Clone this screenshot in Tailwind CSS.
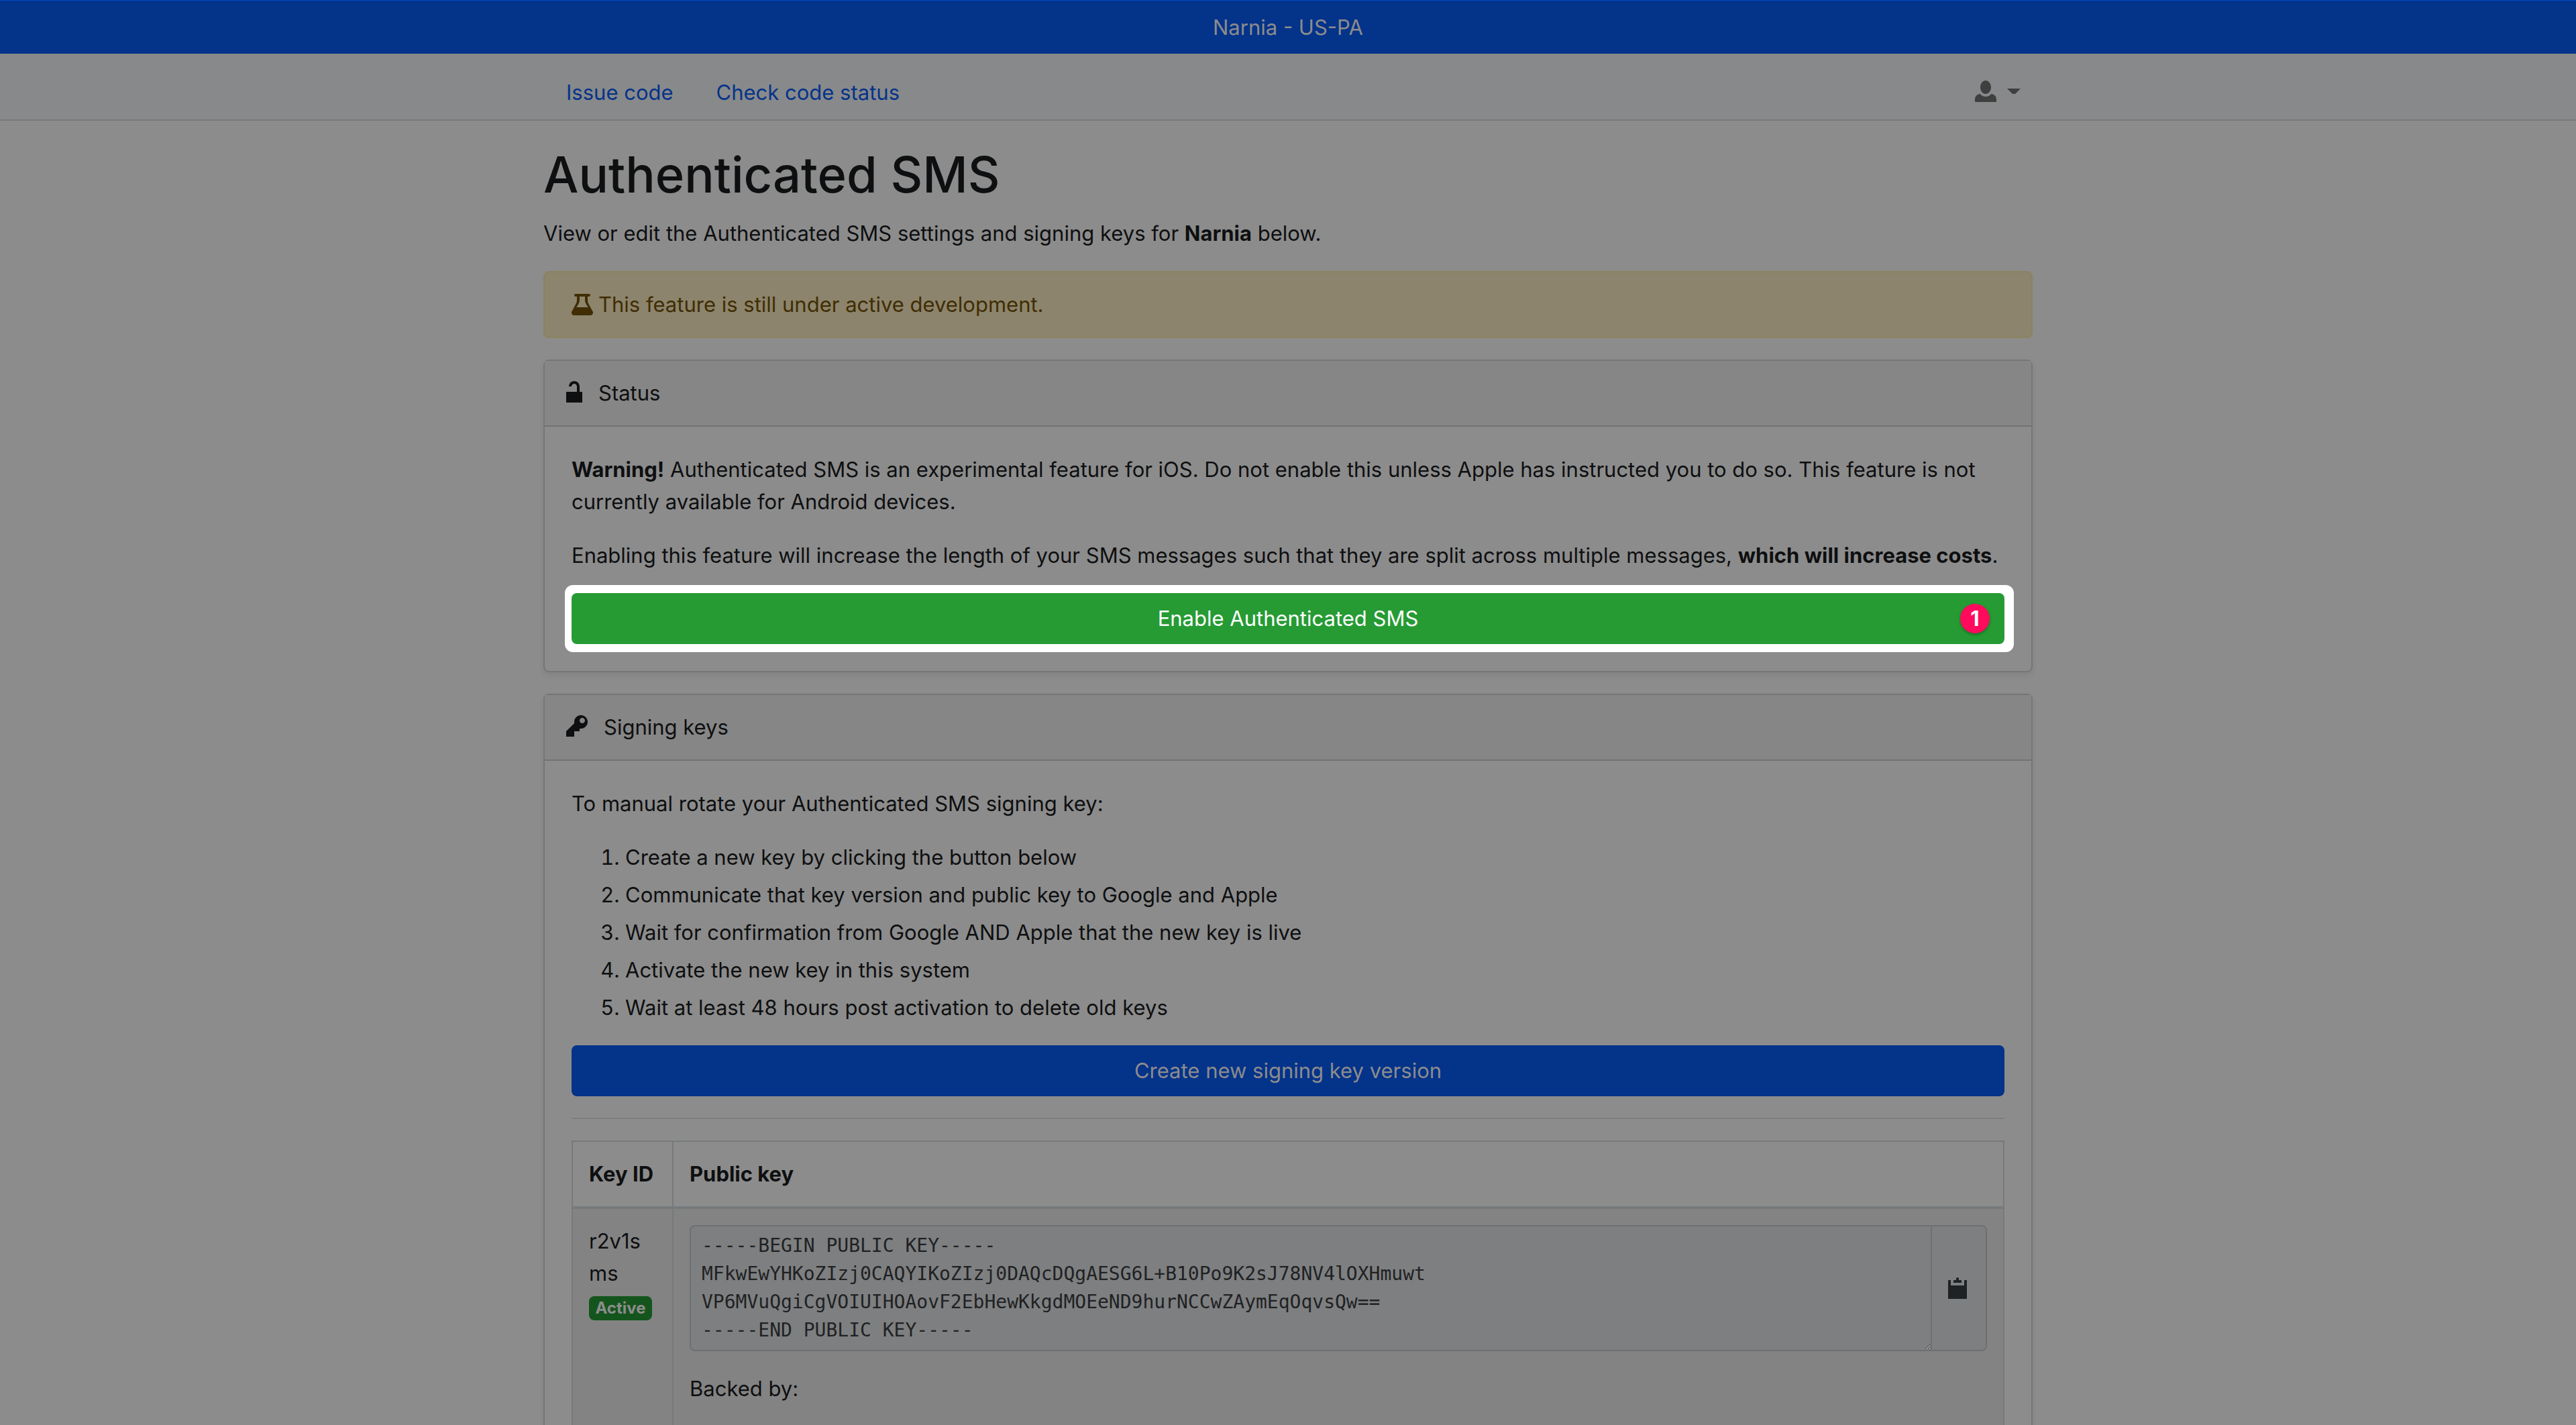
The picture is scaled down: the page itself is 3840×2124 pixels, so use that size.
<!DOCTYPE html>
<html lang="en">
<head>
<meta charset="utf-8">
<title>Authenticated SMS</title>
<script src="https://cdn.jsdelivr.net/npm/@tailwindcss/browser@4"></script>
</head>
<body class="h-screen overflow-hidden bg-[#8c8c8c] font-['Inter',sans-serif] text-[31px] leading-[48px] text-[#0e0f10]">
<div class="border-t border-[#0447cc] bg-[#04338a] pt-4 pb-[15px] text-center text-[#8c8c8c]">Narnia - US-PA</div>
<header class="border-b-2 border-[#76797b] bg-[#88898a] pt-[34px] pb-4">
  <nav class="mx-auto flex w-full max-w-[2220px] items-center gap-16 px-[34px] text-[#04338a]">
    <a href="#issue">Issue code</a>
    <a href="#status">Check code status</a>
    <button type="button" aria-label="Account" class="-mr-4 ml-auto flex items-center gap-4 pb-1 text-[#3f3f3f]">
      <svg class="size-8" viewBox="0 0 8 8" fill="currentColor"><path d="M4 0c-1.1 0-2 1.12-2 2.5s.9 2.5 2 2.5 2-1.12 2-2.5-.9-2.5-2-2.5zm-2.09 5c-1.06.05-1.91.92-1.91 2v1h8v-1c0-1.08-.84-1.95-1.91-2-.54.61-1.28 1-2.09 1-.81 0-1.55-.39-2.09-1z"/></svg>
      <svg class="h-2 w-5" viewBox="0 0 20 8" fill="currentColor"><path d="M0 0h20l-8 8h-4z"/></svg>
    </button>
  </nav>
</header>

<main class="mx-auto w-full max-w-[2220px] pt-8">
  <h1 class="mb-4 text-[74px] leading-[96px] font-medium">Authenticated SMS</h1>
  <p class="mb-8">View or edit the Authenticated SMS settings and signing keys for <strong>Narnia</strong> below.</p>

  <div role="alert" class="mb-8 flex items-center gap-2 rounded-lg border-2 border-[#8c8261] bg-[#8c846c] px-10 py-6 text-[#402d04]">
    <svg class="size-8" viewBox="0 0 8 8" fill="currentColor"><path fill-rule="evenodd" d="M1.5 0a.5.5 0 0 0 0 1h.5v1.4c0 .9-.5 1.6-1.2 2.9-.4.7-.8 1.2-.8 1.7 0 .6.4 1 1 1h6c.6 0 1-.4 1-1 0-.5-.4-1-.8-1.7-.7-1.3-1.2-2-1.2-2.9v-1.4h.5a.5.5 0 0 0 0-1zM3 1h2v1.4c0 .9.6 1.8 1.2 2.6h-4.4c.6-.8 1.2-1.700 1.200-2.600z"/></svg>
    <span>This feature is still under active development.</span>
  </div>

  <section class="mb-8 rounded-lg border-2 border-[#767676] shadow-[0_4px_8px_rgba(0,0,0,0.075)]">
    <h2 class="flex items-center gap-6 border-b-2 border-[#727272] bg-[#868686] px-8 py-6">
      <svg class="-mt-1 h-8 w-6" viewBox="0 0 6 8" fill="currentColor"><path d="M3 0c-1.1 0-2 .9-2 2h1c0-.56.44-1 1-1s1 .44 1 1v2h-4v4h6v-4h-1v-2c0-1.1-.9-2-2-2z"/></svg>
      Status
    </h2>
    <div class="p-10">
      <p class="mb-8"><strong>Warning!</strong> Authenticated SMS is an experimental feature for iOS. Do not enable this unless Apple has instructed you to do so. This feature is not currently available for Android devices.</p>
      <p class="mb-8">Enabling this feature will increase the length of your SMS messages such that they are split across multiple messages, <strong>which will increase costs</strong>.</p>
      <div class="relative isolate">
        <div class="absolute -inset-y-3 -right-3.5 -left-2.5 -z-10 rounded-xl bg-white"></div>
        <button type="button" class="block w-full rounded-lg bg-[#269b34] py-3.5 text-white">Enable Authenticated SMS</button>
        <span class="absolute top-4 right-[22px] size-11 rounded-full bg-[#ff0a5c] text-center text-[31px] leading-11 font-bold text-white shadow-[0_2px_4px_rgba(0,0,0,0.3)]">1</span>
      </div>
    </div>
  </section>

  <section class="rounded-t-lg border-2 border-[#767676] shadow-[0_4px_8px_rgba(0,0,0,0.075)]">
    <h2 class="flex items-center gap-6 border-b-2 border-[#727272] bg-[#868686] px-8 py-6">
      <svg class="-mt-1 size-8" viewBox="0 0 8 8" fill="currentColor"><path d="M5.5 0c-1.38 0-2.5 1.12-2.5 2.5 0 .16 0 .32.03.47l-3.03 3.03v2h3v-2h2v-1l.03-.03c.15.03.31.03.47.03 1.38 0 2.5-1.12 2.5-2.5s-1.12-2.5-2.5-2.5zm.5 1c.55 0 1 .45 1 1s-.45 1-1 1-1-.45-1-1 .45-1 1-1z"/></svg>
      Signing keys
    </h2>
    <div class="p-10">
      <p class="mb-8">To manual rotate your Authenticated SMS signing key:</p>
      <ol class="mb-8 flex list-decimal flex-col gap-2 pl-20">
        <li>Create a new key by clicking the button below</li>
        <li>Communicate that key version and public key to Google and Apple</li>
        <li>Wait for confirmation from Google AND Apple that the new key is live</li>
        <li>Activate the new key in this system</li>
        <li>Wait at least 48 hours post activation to delete old keys</li>
      </ol>
      <button type="button" class="block w-full rounded-lg bg-[#04338a] py-3.5 text-[#8c8c8c]">Create new signing key version</button>
      <hr class="my-8 border-t-2 border-[#7d7d7d]">
      <table class="w-full table-fixed border-separate border-spacing-0 border-2 border-[#767a7c] text-left align-top">
        <colgroup><col class="w-[150px]"><col></colgroup>
        <thead>
          <tr>
            <th scope="col" class="border-r-2 border-b-4 border-[#767a7c] py-6 pl-6 font-bold whitespace-nowrap">Key ID</th>
            <th scope="col" class="border-b-4 border-[#767a7c] p-6 font-bold">Public key</th>
          </tr>
        </thead>
        <tbody class="bg-[#838383]">
          <tr>
            <td class="border-r-2 border-[#767a7c] p-6 align-top">
              <span class="block break-all">r2v1s ms</span>
              <span class="mt-[10px] block w-[94px] rounded-lg bg-[#14551d] py-1.5 text-center text-2xl leading-6 font-bold text-[#8c8c8c]">Active</span>
            </td>
            <td class="p-6 align-top">
              <div class="mb-8 flex">
                <textarea aria-label="Public key" readonly rows="4" class="block h-[188px] min-w-0 flex-1 resize rounded-l-lg border-2 border-[#6d7073] bg-[#7e7f80] px-4 py-2 font-['DejaVu_Sans_Mono',monospace] text-[28px] leading-[42px] text-[#1f2224]">-----BEGIN PUBLIC KEY-----
MFkwEwYHKoZIzj0CAQYIKoZIzj0DAQcDQgAESG6L+B10Po9K2sJ78NV4lOXHmuwt
VP6MVuQgiCgVOIUIHOAovF2EbHewKkgdMOEeND9hurNCCwZAymEqOqvsQw==
-----END PUBLIC KEY-----</textarea>
                <button type="button" aria-label="Copy public key" class="-ml-0.5 flex w-[84px] items-center rounded-r-lg border-2 border-[#6d7073] bg-[#7e7f80] pl-6 text-[#1f2224]">
                  <svg class="h-8 w-7" viewBox="0 0 7 8" fill="currentColor"><path d="M3.5 0c-.28 0-.5.22-.5.5v.5h-.75c-.14 0-.25.11-.25.25v.75h3v-.75c0-.14-.11-.25-.25-.25h-.75v-.5c0-.28-.22-.5-.5-.5zm-3.5 1v7h7v-7h-1v2h-5v-2z"/></svg>
                </button>
              </div>
              <p class="pb-20">Backed by:</p>
            </td>
          </tr>
        </tbody>
      </table>
    </div>
  </section>
</main>
</body>
</html>
